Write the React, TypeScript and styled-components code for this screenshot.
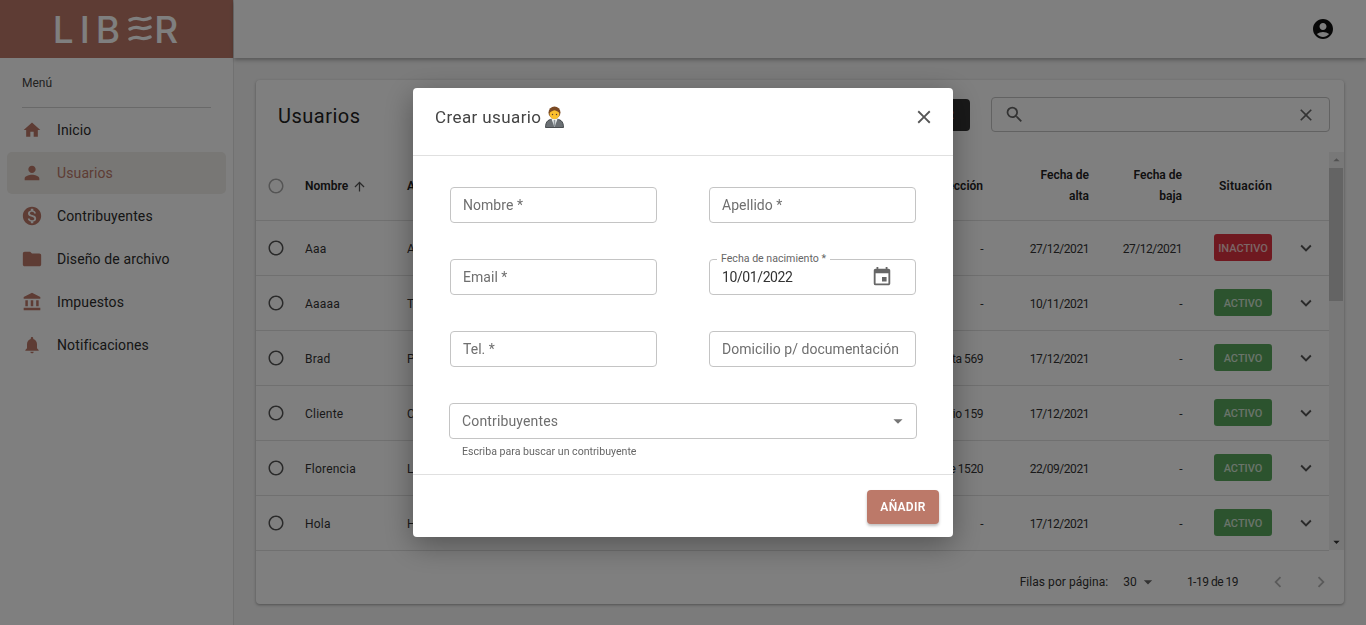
import React from "react";
import styled, { createGlobalStyle } from "styled-components";
import {
  MdAccountBalance,
  MdAccountCircle,
  MdArrowDropDown,
  MdArrowDropUp,
  MdArrowUpward,
  MdChevronLeft,
  MdChevronRight,
  MdClose,
  MdEvent,
  MdFolder,
  MdHome,
  MdKeyboardArrowDown,
  MdMonetizationOn,
  MdNotifications,
  MdPerson,
  MdRadioButtonUnchecked,
  MdSearch,
} from "react-icons/md";

const FONT = `Roboto, "Liberation Sans", sans-serif`;
const BRAND = "#bc7969";

const GlobalStyle = createGlobalStyle`
  html, body {
    margin: 0;
    height: 100%;
    overflow: hidden;
    font-family: ${FONT};
    background: #f6f6f6;
  }
  * { box-sizing: border-box; }
`;

const Page = styled.div`
  display: flex;
  width: 1366px;
  height: 625px;
  overflow: hidden;
`;

const Sidebar = styled.aside`
  width: 234px;
  flex: none;
  background: #fff;
  border-right: 1px solid #e3e3e3;
`;

const LogoBar = styled.div`
  height: 58px;
  background: ${BRAND};
  display: flex;
  align-items: center;
  justify-content: center;
  gap: 2px;
  padding-left: 4px;
  color: #fff;
  font-size: 37px;
  font-family: Inter, sans-serif;
  font-weight: 500;
  letter-spacing: 6px;
`;

const LogoText = styled.span`
  line-height: 1;
`;

const MenuLabel = styled.div`
  font-size: 12px;
  color: #444;
  padding: 18px 0 0 22px;
  height: 49px;
`;

const MenuDivider = styled.div`
  height: 1px;
  margin: 0 22px;
  background: #d2d2d2;
`;

const MenuList = styled.nav`
  display: flex;
  flex-direction: column;
  gap: 1px;
  padding: 0 7px;
  margin-top: 1px;
`;

const MenuItem = styled.div<{ $active?: boolean }>`
  display: flex;
  align-items: center;
  height: 42px;
  border-radius: 5px;
  padding-left: 14px;
  gap: 14px;
  font-size: 14px;
  letter-spacing: 0.12px;
  color: ${(p) => (p.$active ? BRAND : "#2c2c2c")};
  background: ${(p) => (p.$active ? "#f0eeea" : "transparent")};
`;

const MenuIcon = styled.span`
  width: 22px;
  flex: none;
  display: flex;
  justify-content: center;
  color: ${BRAND};
`;

const Main = styled.div`
  flex: 1;
  min-width: 0;
  display: flex;
  flex-direction: column;
`;

const TopBar = styled.header`
  height: 58px;
  flex: none;
  background: #fff;
  box-shadow: 0 2px 4px rgba(0, 0, 0, 0.3);
  display: flex;
  align-items: center;
  justify-content: flex-end;
  padding-right: 31px;
  color: #111;
`;

const Content = styled.main`
  padding: 22px;
`;

const Card = styled.section`
  height: 524px;
  background: #fff;
  border-radius: 4px;
  box-shadow: 0 1px 3px rgba(0, 0, 0, 0.35);
  display: flex;
  flex-direction: column;
`;

const CardHeader = styled.div`
  height: 72px;
  flex: none;
  display: flex;
  align-items: center;
  padding: 0 14px 3px 22px;
`;

const CardTitle = styled.h2`
  margin: 3px 0 0;
  flex: 1;
  font-size: 20px;
  font-weight: 400;
  letter-spacing: 0.5px;
  color: #222;
`;

const CreateButton = styled.button`
  width: 150px;
  height: 32px;
  margin-right: 21px;
  border: 0;
  border-radius: 4px;
  background: #333;
  color: ${BRAND};
  font: 500 13px ${FONT};
  text-align: right;
  padding: 0 16px;
`;

const SearchBox = styled.div`
  width: 339px;
  height: 35px;
  display: flex;
  align-items: center;
  justify-content: space-between;
  padding: 0 13px 0 12px;
  border: 1px solid #c4c4c4;
  border-radius: 4px;
  color: #666;
`;

const TableArea = styled.div`
  flex: 1;
  min-height: 0;
  display: flex;
`;

const TableBody = styled.div`
  flex: 1;
  min-width: 0;
`;

const GRID = "49px 102px 200px 376px 106px 93px 90px 57px";

const HeadRow = styled.div`
  height: 69px;
  display: grid;
  grid-template-columns: ${GRID};
  align-items: center;
  border-bottom: 1px solid #e0e0e0;
  font-size: 12px;
  font-weight: 600;
  color: #222;
`;

const Row = styled.div`
  height: 55px;
  display: grid;
  grid-template-columns: ${GRID};
  align-items: center;
  border-bottom: 1px solid #e0e0e0;
  font-size: 12px;
  color: #333;
`;

const CheckCell = styled.div<{ $muted?: boolean }>`
  display: flex;
  padding-left: 11px;
  color: ${(p) => (p.$muted ? "#aaa" : "#555")};
`;

const NameCell = styled.div`
  display: flex;
  align-items: center;
  gap: 4px;
  svg {
    color: #555;
  }
`;

const RowName = styled(NameCell)`
  padding-top: 2px;
  letter-spacing: 0.2px;
`;

const RightCell = styled.div`
  text-align: right;
  line-height: 21px;
  white-space: nowrap;
`;

const RowValue = styled(RightCell)`
  padding-top: 2px;
  letter-spacing: -0.45px;
`;

const EndCell = styled.div`
  display: flex;
  justify-content: flex-end;
`;

const HeadSituation = styled.div`
  width: 53px;
  white-space: nowrap;
  letter-spacing: 0.3px;
`;

const ChevronCell = styled.div`
  display: flex;
  justify-content: center;
  padding-left: 11px;
  padding-bottom: 1px;
  color: #555;
`;

const Chip = styled.span<{ $on: boolean }>`
  width: 58px;
  height: 27px;
  padding-top: 2px;
  border-radius: 3px;
  display: flex;
  align-items: center;
  justify-content: center;
  margin-top: -1px;
  font-size: 11px;
  font-weight: 500;
  color: rgba(255, 255, 255, 0.75);
  background: ${(p) => (p.$on ? "#58a65c" : "#de3340")};
`;

const ScrollTrack = styled.div`
  width: 15px;
  flex: none;
  background: #f1f1f1;
  display: flex;
  flex-direction: column;
  height: 398px;
`;

const ScrollCap = styled.div`
  height: 16px;
  display: flex;
  align-items: center;
  justify-content: center;
  color: #a3a3a3;
`;

const ScrollThumb = styled.div`
  width: 14px;
  height: 133px;
  background: #c8c8c8;
`;

const ScrollSpacer = styled.div`
  flex: 1;
`;

const ScrollCapEnd = styled(ScrollCap)`
  color: #333;
`;

const CardFooter = styled.div`
  height: 54px;
  flex: none;
  display: flex;
  align-items: center;
  justify-content: flex-end;
  padding: 9px 12px 0 0;
  font-size: 12px;
  letter-spacing: 0.05px;
  color: #333;
`;

const PerPage = styled.div`
  display: flex;
  align-items: center;
  margin: 0 29px 0 15px;
  svg {
    color: #666;
    margin-left: 1px;
  }
`;

const PageInfo = styled.div`
  margin-right: 29px;
  letter-spacing: -0.5px;
`;

const PageArrows = styled.div`
  display: flex;
  gap: 21px;
  color: #b5b5b5;
`;

const Overlay = styled.div`
  position: fixed;
  inset: 0;
  background: rgba(0, 0, 0, 0.5);
  display: flex;
  align-items: center;
  justify-content: center;
`;

const Modal = styled.div`
  width: 540px;
  height: 449px;
  background: #fff;
  border-radius: 4px;
  box-shadow: 0 8px 30px rgba(0, 0, 0, 0.35);
  display: flex;
  flex-direction: column;
`;

const ModalHeader = styled.div`
  height: 68px;
  flex: none;
  display: flex;
  align-items: center;
  justify-content: space-between;
  padding: 0 18px 10px 22px;
  border-bottom: 1px solid #e0e0e0;
  color: #555;
`;

const ModalTitle = styled.h3`
  margin: 0;
  display: flex;
  align-items: center;
  gap: 4px;
  font-size: 17px;
  font-weight: 400;
  letter-spacing: 0.4px;
  color: #444;
`;

const ModalBody = styled.div`
  flex: 1;
  min-height: 0;
  display: grid;
  grid-template-columns: 207px 207px;
  align-content: start;
  column-gap: 52px;
  row-gap: 36px;
  padding: 31px 37px 0;
`;

const Field = styled.div`
  position: relative;
  height: 36px;
  border: 1px solid #c4c4c4;
  border-radius: 4px;
  display: flex;
  align-items: center;
  justify-content: space-between;
  padding: 0 12px;
  font-size: 14px;
  letter-spacing: 0.04px;
  color: #6f6f6f;
  white-space: nowrap;
`;

const WideBlock = styled.div`
  grid-column: 1 / -1;
  margin: 0 -1px;
`;

const WideField = styled(Field)`
  padding-right: 7px;
  letter-spacing: 0.15px;
  svg {
    color: #757575;
  }
`;

const FloatLabel = styled.span`
  position: absolute;
  top: -8px;
  left: 7px;
  padding: 0 4px;
  background: #fff;
  font-size: 10.6px;
  letter-spacing: 0;
  line-height: 14px;
  color: #666;
`;

const DateValue = styled.span`
  color: #333;
  letter-spacing: -0.4px;
`;

const CalendarIcon = styled(MdEvent)`
  color: #666;
  margin-right: 10px;
`;

const Helper = styled.div`
  margin: 6px 0 0 13px;
  font-size: 10.6px;
  line-height: 13px;
  color: #666;
`;

const ModalFooter = styled.div`
  height: 63px;
  flex: none;
  display: flex;
  align-items: flex-start;
  justify-content: flex-end;
  padding: 15px 14px 0;
  border-top: 1px solid #e0e0e0;
`;

const SubmitButton = styled.button`
  width: 72px;
  height: 34px;
  border: 0;
  border-radius: 4px;
  background: ${BRAND};
  color: #fff;
  font: 600 12px ${FONT};
  letter-spacing: 0.3px;
  box-shadow: 0 2px 3px rgba(0, 0, 0, 0.25);
`;

const menu = [
  { label: "Inicio", Icon: MdHome, size: 20 },
  { label: "Usuarios", Icon: MdPerson, size: 22, active: true },
  { label: "Contribuyentes", Icon: MdMonetizationOn, size: 22 },
  { label: "Diseño de archivo", Icon: MdFolder, size: 22 },
  { label: "Impuestos", Icon: MdAccountBalance, size: 20 },
  { label: "Notificaciones", Icon: MdNotifications, size: 20 },
];

const users = [
  { name: "Aaa", last: "Aaa", address: "-", from: "27/12/2021", to: "27/12/2021", active: false },
  { name: "Aaaaa", last: "Tester", address: "-", from: "10/11/2021", to: "-", active: true },
  { name: "Brad", last: "Pitt", address: "Santa 569", from: "17/12/2021", to: "-", active: true },
  { name: "Cliente", last: "Cliente", address: "Rosario 159", from: "17/12/2021", to: "-", active: true },
  { name: "Florencia", last: "Lopez", address: "Mitre 1520", from: "22/09/2021", to: "-", active: true },
  { name: "Hola", last: "Hola", address: "-", from: "17/12/2021", to: "-", active: true },
];

// the wavy E of the logo
const LogoWaves = () => (
  <svg width="24" height="26" viewBox="0 0 24 26" fill="none" stroke="#fff" strokeWidth="3.4" strokeLinecap="round">
    <path d="M2 4 C6 2 9 2 12 3 C15 4 18 4 22 2" />
    <path d="M2 13 C6 11 9 11 12 12 C15 13 18 13 22 11" />
    <path d="M2 23 C6 21 9 21 12 22 C15 23 18 23 22 21" />
  </svg>
);

// person with suit, stands in for the emoji of the title
const PersonEmoji = () => (
  <svg width="19" height="22" viewBox="0 0 19 22">
    <path d="M0.5 21.5 C0.5 15 3.5 13 9.5 13 C15.5 13 18.5 15 18.5 21.5 Z" fill="#6b7074" stroke="#2f3336" strokeWidth="0.8" />
    <path d="M6.5 13 L9.5 21 L12.5 13 Z" fill="#eceff1" />
    <rect x="8.7" y="14" width="1.6" height="6" fill="#90979c" />
    <circle cx="9.5" cy="6.5" r="6" fill="#7b4a24" />
    <path d="M4.6 8 C4.6 5.5 7.5 5 9.5 4.2 C11.5 5 14.4 5.5 14.4 8 C14.4 11 12 13.2 9.5 13.2 C7 13.2 4.6 11 4.6 8 Z" fill="#fbc02d" />
    <circle cx="7.5" cy="8.5" r="0.7" fill="#5d4037" />
    <circle cx="11.5" cy="8.5" r="0.7" fill="#5d4037" />
  </svg>
);

export default function App() {
  return (
    <>
      <GlobalStyle />
      <Page>
        <Sidebar>
          <LogoBar>
            <LogoText>LIB</LogoText>
            <LogoWaves />
            <LogoText>R</LogoText>
          </LogoBar>
          <MenuLabel>Menú</MenuLabel>
          <MenuDivider />
          <MenuList>
            {menu.map(({ label, Icon, size, active }) => (
              <MenuItem key={label} $active={active}>
                <MenuIcon>
                  <Icon size={size} />
                </MenuIcon>
                {label}
              </MenuItem>
            ))}
          </MenuList>
        </Sidebar>
        <Main>
          <TopBar>
            <MdAccountCircle size={24} />
          </TopBar>
          <Content>
            <Card>
              <CardHeader>
                <CardTitle>Usuarios</CardTitle>
                <CreateButton>CREAR</CreateButton>
                <SearchBox>
                  <MdSearch size={21} />
                  <MdClose size={20} />
                </SearchBox>
              </CardHeader>
              <TableArea>
                <TableBody>
                  <HeadRow>
                    <CheckCell $muted>
                      <MdRadioButtonUnchecked size={18} />
                    </CheckCell>
                    <NameCell>
                      Nombre <MdArrowUpward size={15} />
                    </NameCell>
                    <div>Apellido</div>
                    <RightCell>Dirección</RightCell>
                    <RightCell>
                      Fecha de
                      <br />
                      alta
                    </RightCell>
                    <RightCell>
                      Fecha de
                      <br />
                      baja
                    </RightCell>
                    <EndCell>
                      <HeadSituation>Situación</HeadSituation>
                    </EndCell>
                    <div />
                  </HeadRow>
                  {users.map((u) => (
                    <Row key={u.name}>
                      <CheckCell>
                        <MdRadioButtonUnchecked size={18} />
                      </CheckCell>
                      <RowName>{u.name}</RowName>
                      <RowName>{u.last}</RowName>
                      <RowValue>{u.address}</RowValue>
                      <RowValue>{u.from}</RowValue>
                      <RowValue>{u.to}</RowValue>
                      <EndCell>
                        <Chip $on={u.active}>{u.active ? "ACTIVO" : "INACTIVO"}</Chip>
                      </EndCell>
                      <ChevronCell>
                        <MdKeyboardArrowDown size={22} />
                      </ChevronCell>
                    </Row>
                  ))}
                </TableBody>
                <ScrollTrack>
                  <ScrollCap>
                    <MdArrowDropUp size={16} />
                  </ScrollCap>
                  <ScrollThumb />
                  <ScrollSpacer />
                  <ScrollCapEnd>
                    <MdArrowDropDown size={16} />
                  </ScrollCapEnd>
                </ScrollTrack>
              </TableArea>
              <CardFooter>
                Filas por página:
                <PerPage>
                  30 <MdArrowDropDown size={20} />
                </PerPage>
                <PageInfo>1-19 de 19</PageInfo>
                <PageArrows>
                  <MdChevronLeft size={22} />
                  <MdChevronRight size={22} />
                </PageArrows>
              </CardFooter>
            </Card>
          </Content>
        </Main>
      </Page>
      <Overlay>
        <Modal>
          <ModalHeader>
            <ModalTitle>
              Crear usuario <PersonEmoji />
            </ModalTitle>
            <MdClose size={22} />
          </ModalHeader>
          <ModalBody>
            <Field>Nombre *</Field>
            <Field>Apellido *</Field>
            <Field>Email *</Field>
            <Field>
              <FloatLabel>Fecha de nacimiento *</FloatLabel>
              <DateValue>10/01/2022</DateValue>
              <CalendarIcon size={22} />
            </Field>
            <Field>Tel. *</Field>
            <Field>Domicilio p/ documentación</Field>
            <WideBlock>
              <WideField>
                Contribuyentes
                <MdArrowDropDown size={22} />
              </WideField>
              <Helper>Escriba para buscar un contribuyente</Helper>
            </WideBlock>
          </ModalBody>
          <ModalFooter>
            <SubmitButton>AÑADIR</SubmitButton>
          </ModalFooter>
        </Modal>
      </Overlay>
    </>
  );
}
